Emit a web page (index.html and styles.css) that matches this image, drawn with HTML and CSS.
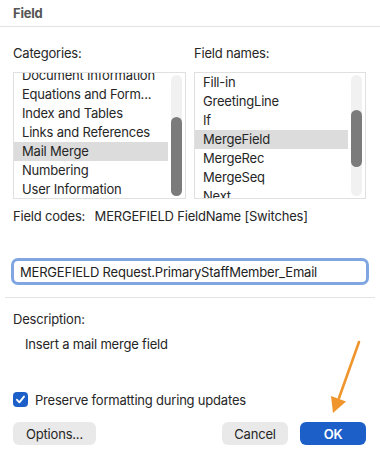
FILE: index.html
```html
<!DOCTYPE html>
<html lang="en">
<head>
    <meta charset="UTF-8">
    <title>Field</title>
    <link rel="stylesheet" href="styles.css">
</head>
<body>
    <div class="dialog">
        <div class="title">Field</div>
        <div class="content">
            <div class="lists">
                <div class="list-group">
                    <div class="label">Categories:</div>
                    <div class="listbox">
                        <ul class="items scrolled">
                            <li>Document Information</li>
                            <li>Equations and Form...</li>
                            <li>Index and Tables</li>
                            <li>Links and References</li>
                            <li class="selected">Mail Merge</li>
                            <li>Numbering</li>
                            <li>User Information</li>
                        </ul>
                        <div class="scrollbar"><div class="thumb" style="margin-top: 42px; height: 79px;"></div></div>
                    </div>
                </div>
                <div class="list-group">
                    <div class="label">Field names:</div>
                    <div class="listbox">
                        <ul class="items">
                            <li>Fill-in</li>
                            <li>GreetingLine</li>
                            <li>If</li>
                            <li class="selected">MergeField</li>
                            <li>MergeRec</li>
                            <li>MergeSeq</li>
                            <li>Next</li>
                        </ul>
                        <div class="scrollbar"><div class="thumb" style="margin-top: 35px; height: 57px;"></div></div>
                    </div>
                </div>
            </div>

            <div class="codes">
                <span class="codes-label">Field codes:</span>
                <span>MERGEFIELD FieldName [Switches]</span>
            </div>

            <input class="code-input" type="text" value="MERGEFIELD Request.PrimaryStaffMember_Email">

            <hr class="separator">

            <div class="label desc-label">Description:</div>
            <div class="desc">Insert a mail merge field</div>

            <label class="check-row">
                <span class="checkbox">
                    <svg width="11" height="11" viewBox="0 0 11 11"><path d="M2 5.8 L4.4 8.3 L9 2.6" fill="none" stroke="#fff" stroke-width="1.9" stroke-linecap="round" stroke-linejoin="round"/></svg>
                </span>
                Preserve formatting during updates
            </label>

            <div class="buttons">
                <button class="btn">Options...</button>
                <div class="right-buttons">
                    <button class="btn">Cancel</button>
                    <button class="btn primary">OK</button>
                </div>
            </div>
        </div>

        <!-- annotation arrow pointing at OK -->
        <svg class="arrow" width="380" height="462" viewBox="0 0 380 462">
            <line x1="359" y1="342" x2="339" y2="398" stroke="#f0952c" stroke-width="2.6" stroke-linecap="round"/>
            <polygon points="333,413 331,396 346,401.5" fill="#f0952c"/>
        </svg>
    </div>
</body>
</html>
```

FILE: styles.css
```css
* {
    box-sizing: border-box;
    margin: 0;
    padding: 0;
}

body {
    font-family: 'Inter', 'Noto Sans', sans-serif;
    font-size: 13px;
    letter-spacing: -0.2px;
    color: #262626;
    background: #fff;
}

.dialog {
    position: relative;
    width: 380px;
    height: 462px;
    overflow: hidden;
}

.title {
    height: 27px;
    line-height: 26px;
    padding: 0 13px;
    font-weight: 700;
    color: #555;
    border-bottom: 1px solid #e3e3e3;
}

.content {
    padding: 18px 14px 0 13px;
}

.lists {
    display: grid;
    grid-template-columns: 173px 172px;
    column-gap: 8px;
}

.label {
    line-height: 16px;
    margin-bottom: 11px;
}

.listbox {
    display: flex;
    height: 127px;
    border: 1px solid #e0e0e0;
    overflow: hidden;
}

.items {
    list-style: none;
    flex: 1;
    overflow: hidden;
}

.items.scrolled {
    margin-top: -7px;
}

.items li {
    height: 19px;
    line-height: 19px;
    padding-left: 8px;
    white-space: nowrap;
}

.items li.selected {
    background-color: #dcdcdc;
}

.scrollbar {
    width: 11px;
    margin: 2px 3px 2px 3px;
    border-radius: 6px;
    background-color: #f1f1f1;
}

.thumb {
    border-radius: 6px;
    background-color: #7b7b7b;
}

.codes {
    margin-top: 9px;
    line-height: 16px;
}

.codes-label {
    margin-right: 6px;
}

.code-input {
    display: block;
    width: 358px;
    height: 27px;
    margin: 34px 0 0 -2px;
    padding: 0 6px;
    border: 3px solid #7fa6e1;
    border-radius: 7px;
    font-family: inherit;
    font-size: 13px;
    letter-spacing: -0.2px;
    color: #222;
    outline: none;
}

.separator {
    border: none;
    border-top: 1px solid #e3e3e3;
    margin: 12px -9px 0 -8px;
}

.desc-label {
    margin-top: 13px;
    margin-bottom: 0;
}

.desc {
    margin-top: 9px;
    line-height: 16px;
    padding-left: 12px;
}

.check-row {
    display: flex;
    align-items: center;
    gap: 7px;
    margin-top: 40px;
    height: 15px;
}

.checkbox {
    display: flex;
    align-items: center;
    justify-content: center;
    width: 15px;
    height: 15px;
    border-radius: 4px;
    background-color: #1c5fc9;
}

.buttons {
    display: flex;
    justify-content: space-between;
    margin-top: 15px;
}

.right-buttons {
    display: flex;
    gap: 12px;
}

.btn {
    height: 23px;
    padding: 0 12px;
    border: none;
    border-radius: 6px;
    background-color: #e9e9e9;
    font-family: inherit;
    font-size: 13px;
    letter-spacing: -0.2px;
    color: #262626;
}

.btn:first-child {
    width: 83px;
}

.right-buttons .btn {
    width: 66px;
}

.btn.primary {
    background-color: #1c5fc9;
    color: #fff;
    font-weight: 600;
}

.arrow {
    position: absolute;
    left: 0;
    top: 0;
    pointer-events: none;
}
```
